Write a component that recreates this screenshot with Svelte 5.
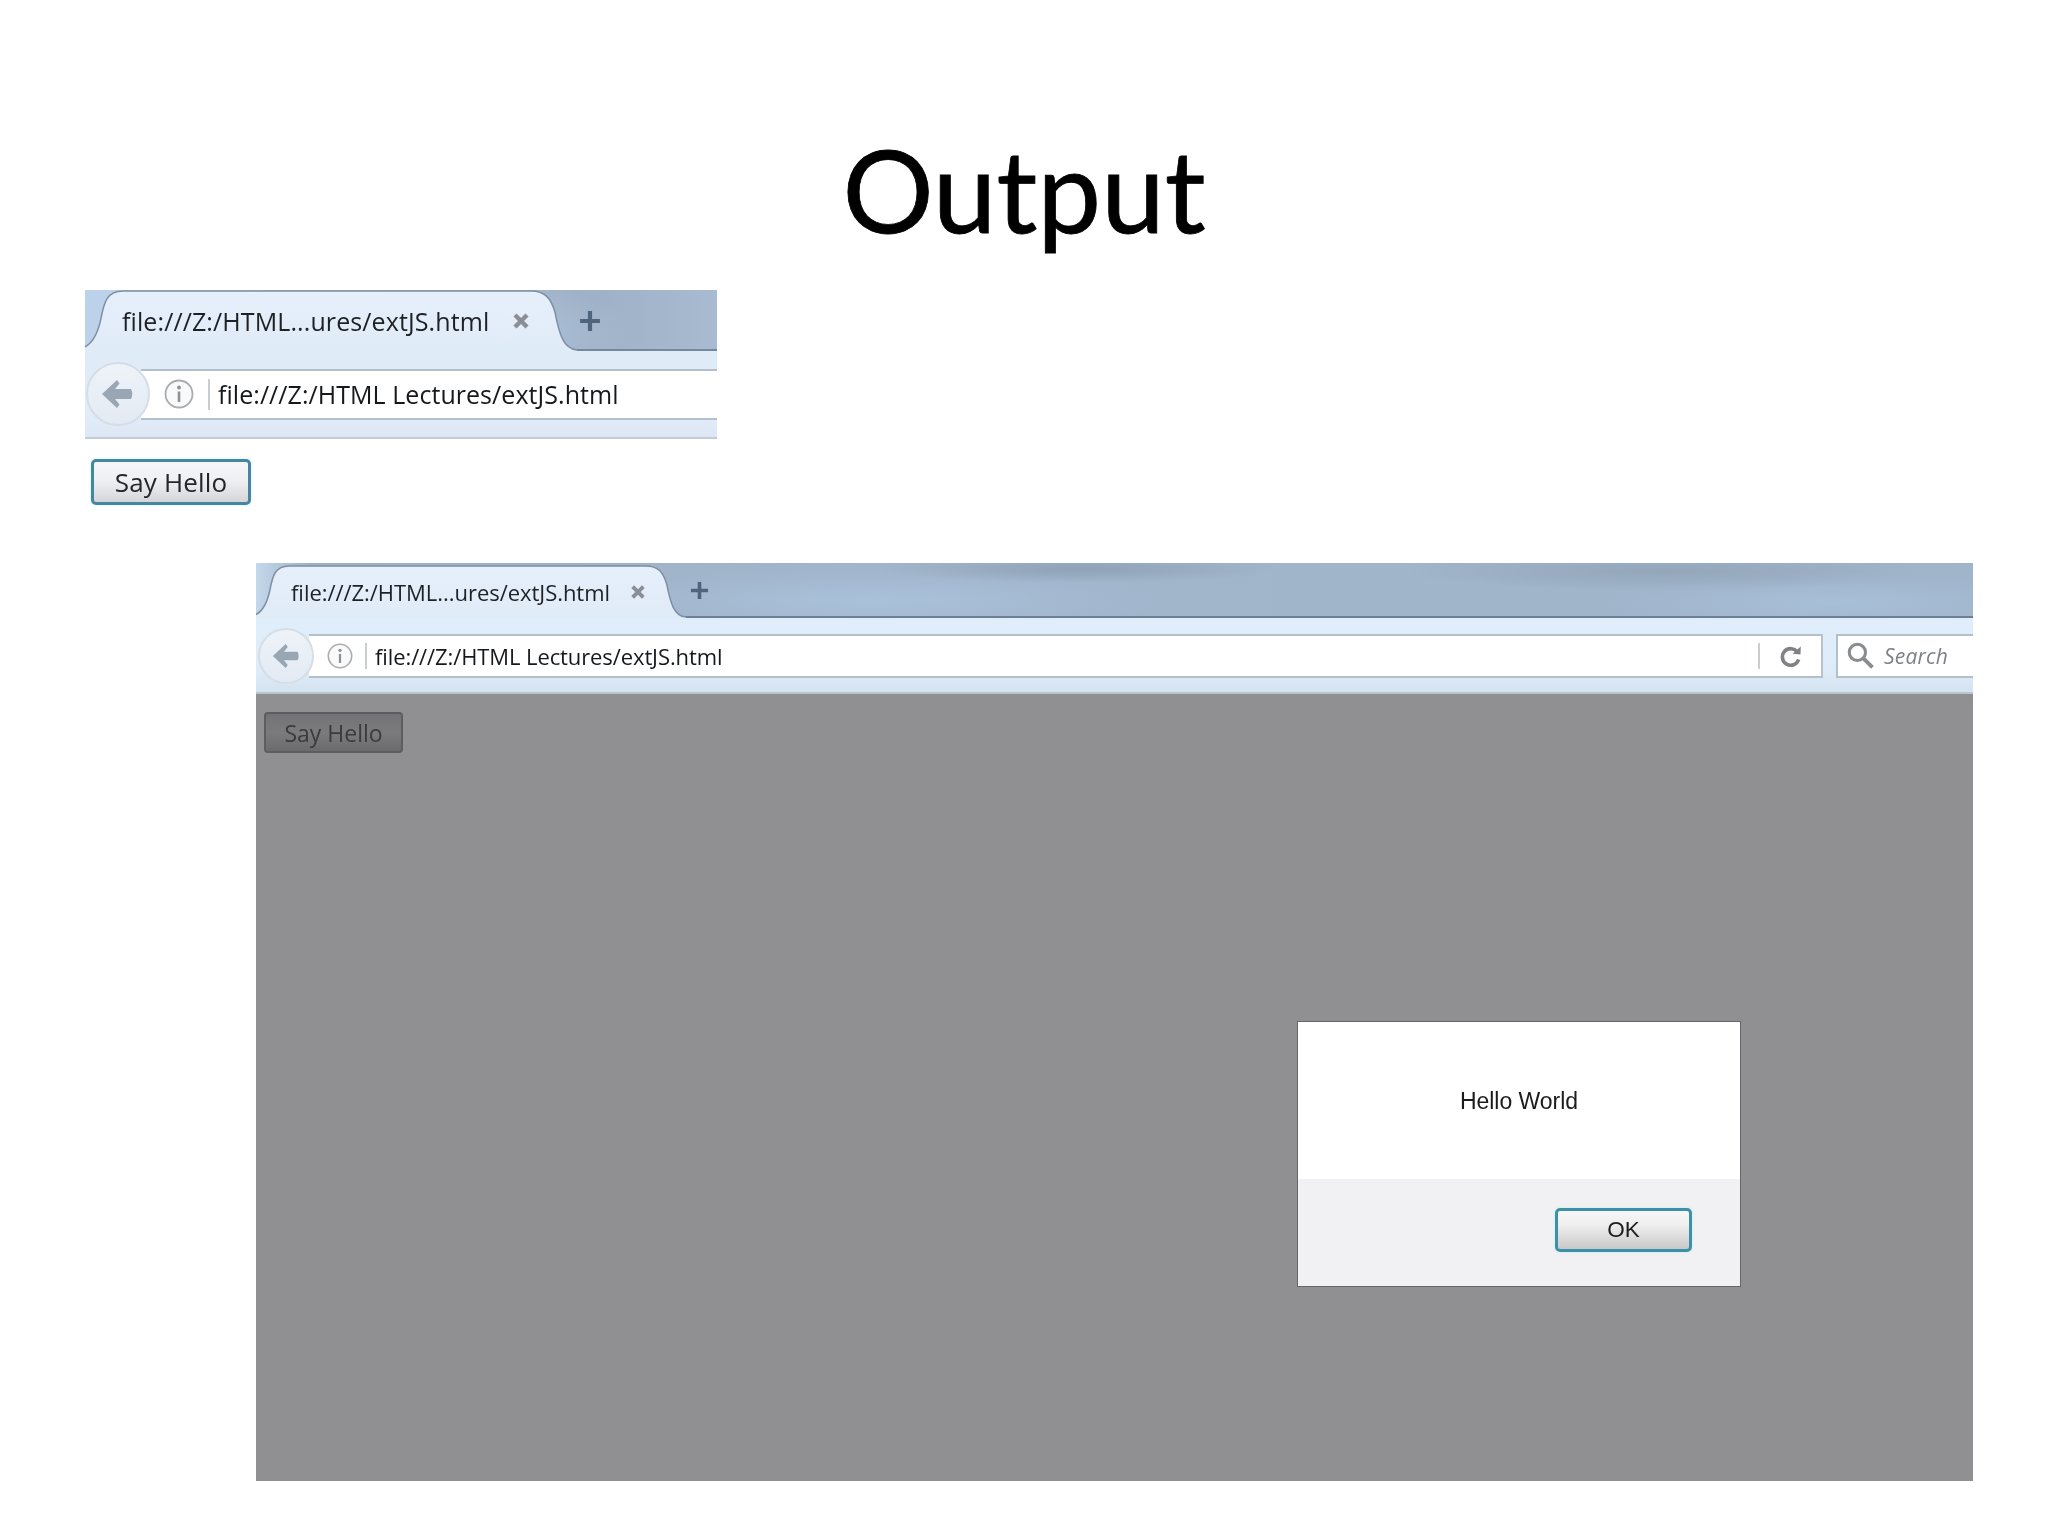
<script>
  const tabText = 'file:///Z:/HTML...ures/extJS.html';
  const urlText = 'file:///Z:/HTML Lectures/extJS.html';
</script>

{#snippet chrome(size, full)}
  <div class="bar {size}">
    <div class="tab">
      <svg class="tabshape" viewBox="0 0 492 60" preserveAspectRatio="none" aria-hidden="true">
        <defs>
          <linearGradient id="tabfill-{size}" x1="0" y1="0" x2="0" y2="1">
            <stop offset="0" stop-color="#e6f0fb" />
            <stop offset="1" stop-color="#e0ebf8" />
          </linearGradient>
        </defs>
        <path d="M0 60 L0 56 C8 52 13 42 16 28 C19 12 22 1 38 1 L446 1 C460 1 466 8 470 22 C474 42 478 58 492 59 L492 60 Z" fill="url(#tabfill-{size})" />
        <path d="M0 56 C8 52 13 42 16 28 C19 12 22 1 38 1 L446 1 C460 1 466 8 470 22 C474 42 478 58 492 59" fill="none" stroke="#7f8fa3" stroke-width="1.5" vector-effect="non-scaling-stroke" />
      </svg>
      <span class="tabtext">{tabText}</span>
      <svg class="close" viewBox="0 0 18 18" aria-hidden="true">
        <path d="M3 3 L15 15 M15 3 L3 15" stroke="#8b8f95" stroke-width="4.4" fill="none" />
      </svg>
    </div>
    <svg class="plus" viewBox="0 0 20 20" aria-hidden="true">
      <path d="M10 1 V19 M1 10 H19" stroke="#4f647d" stroke-width="3.8" fill="none" />
    </svg>
  </div>
  <div class="tools {size}">
    <div class="back">
      <svg viewBox="0 0 34 30" aria-hidden="true">
        <path d="M16 1 L1 15 L16 29 L18.5 25.5 L14 20 H30 Q32.5 15 30 10 H14 L18.5 4.5 Z" fill="#99a6b4" />
      </svg>
    </div>
    <div class="url">
      <svg class="info" viewBox="0 0 30 30" aria-hidden="true">
        <circle cx="15" cy="15" r="13.5" fill="#f9fafb" stroke="#a9abad" stroke-width="1.8" />
        <circle cx="15" cy="8.5" r="1.9" fill="#8f9294" />
        <path d="M15 12.5 V23" stroke="#8f9294" stroke-width="2.6" />
      </svg>
      <span class="sep"></span>
      <span class="urltext">{urlText}</span>
      {#if full}
        <span class="sep right"></span>
        <svg class="reload" viewBox="0 0 24 24" aria-hidden="true">
          <path d="M18.5 8.2 A8.3 8.3 0 1 0 19.6 15.5" fill="none" stroke="#7f8184" stroke-width="3.6" />
          <path d="M13.5 9.8 L21.5 10.4 L21.8 2.6 Z" fill="#7f8184" />
        </svg>
      {/if}
    </div>
    {#if full}
      <div class="search">
        <svg viewBox="0 0 26 26" aria-hidden="true">
          <circle cx="10" cy="10" r="7.8" fill="none" stroke="#8a8d90" stroke-width="3" />
          <path d="M15.6 15.6 L24.5 24.5" stroke="#8a8d90" stroke-width="3.8" />
        </svg>
        <span>Search</span>
      </div>
    {/if}
  </div>
{/snippet}

<div class="page">
  <h1>Output</h1>

  <section class="first">
    {@render chrome('big', false)}
    <button class="hello">Say Hello</button>
  </section>

  <section class="second">
    {@render chrome('small', true)}
    <div class="dim">
      <button class="hello shaded">Say Hello</button>
      <div class="dialog">
        <div class="message">Hello World</div>
        <div class="actions"><button class="ok">OK</button></div>
      </div>
    </div>
  </section>
</div>

<style>
  :global(body) { margin: 0; background: #fff; }
  .page { width: 2048px; height: 1536px; background: #fff; overflow: hidden; font-family: "Open Sans", sans-serif; }
  h1 {
    margin: 0;
    padding-top: 122px;
    height: 168px;
    text-align: center;
    font: 400 114px/134px Lato, sans-serif;
    -webkit-text-stroke: 0.8px #000;
    color: #000;
  }

  .first { margin-left: 85px; width: 632px; height: 273px; filter: blur(0.45px); }
  .second { margin-left: 256px; width: 1717px; height: 918px; display: flex; flex-direction: column; filter: blur(0.45px); }

  .bar { display: flex; align-items: flex-end; position: relative; box-sizing: border-box; }
  .bar.big {
    height: 61px;
    border-bottom: 2px solid #76889c;
    background:
      radial-gradient(ellipse 120px 50px at 430px 45px, #aabfd8, transparent),
      linear-gradient(90deg, #bcd2ea 0, #bcd2ea 6%, #9fb1c6 80%, #a9bbd0 100%);
  }
  .bar.small {
    height: 55px;
    border-bottom: 2px solid #6d7f93;
    background:
      radial-gradient(ellipse 200px 14px at 48% 6px, #8fa2b7, transparent),
      radial-gradient(ellipse 260px 20px at 82% 8px, #93a6ba, transparent),
      radial-gradient(ellipse 240px 30px at 92% 40px, #a7bfd8, transparent),
      radial-gradient(ellipse 300px 34px at 36% 38px, #a9c1da, transparent),
      linear-gradient(90deg, #c4d8ec 0, #9fb3c8 3%, #a1b5cb 40%, #a0b4ca 100%);
  }

  .tab { position: relative; display: flex; align-items: center; box-sizing: border-box; flex: none; margin-bottom: -2px; z-index: 1; }
  .tabshape { position: absolute; left: 0; top: 0; width: 100%; height: 100%; }
  .tabtext, .close { position: relative; }
  .tabtext { white-space: nowrap; color: #1d2126; }
  .close { flex: none; }
  .plus { flex: none; align-self: center; position: relative; top: 1px; }

  .big .tab { width: 492px; height: 61px; padding-left: 37px; }
  .big .tabtext { font-size: 25px; letter-spacing: 0.1px; width: 364px; }
  .big .close { width: 18px; height: 18px; margin-left: 26px; }
  .big .plus { width: 22px; height: 22px; margin-left: 2px; }

  .small .tab { width: 430px; height: 53px; padding-left: 35px; }
  .small .tabtext { font-size: 22px; letter-spacing: -0.04px; width: 317px; }
  .small .close { width: 16px; height: 16px; margin-left: 22px; }
  .small .plus { width: 19px; height: 19px; margin-left: 4px; }

  .tools { display: flex; align-items: center; box-sizing: border-box; position: relative; }
  .tools.big { height: 88px; padding-left: 1px; background: linear-gradient(#e0ebf8, #e2ecf9 78%, #dde7f3); border-bottom: 2px solid #c1ccd8; }
  .tools.small { height: 76px; padding: 1px 0 0 2px; background: linear-gradient(#e0edfa, #deebf8 70%, #d5e3f0); border-bottom: 2px solid #b9c6d2; }

  .back {
    flex: none;
    box-sizing: border-box;
    border-radius: 50%;
    border: 2px solid #d5dde7;
    background: linear-gradient(#eef3f9, #e3eaf3);
    display: flex;
    align-items: center;
    justify-content: center;
    position: relative;
    z-index: 1;
  }
  .big .back { width: 64px; height: 64px; margin-right: -9px; }
  .big .back svg { width: 34px; height: 30px; }
  .small .back { width: 56px; height: 56px; margin-right: -5px; }
  .small .back svg { width: 29px; height: 26px; }

  .url {
    flex: 1;
    min-width: 0;
    display: flex;
    align-items: center;
    box-sizing: border-box;
    background: #fff;
    border-top: 2px solid #b3bfcb;
    border-bottom: 2px solid #b3bfcb;
    color: #16191c;
    white-space: nowrap;
  }
  .big .url { height: 51px; padding-left: 23px; }
  .big .info { width: 30px; height: 30px; flex: none; }
  .big .sep { height: 31px; margin-left: 14px; }
  .big .urltext { font-size: 25px; letter-spacing: 0.05px; margin-left: 8px; }

  .small .url { height: 44px; padding-left: 18px; border-right: 2px solid #b7c3cf; flex: none; width: 1514px; }
  .small .info { width: 26px; height: 26px; flex: none; }
  .small .sep { height: 26px; margin-left: 12px; }
  .small .urltext { font-size: 22px; letter-spacing: -0.1px; margin-left: 8px; }
  .sep { width: 2px; background: #c9ced3; flex: none; }
  .small .sep.right { margin-left: auto; }
  .reload { width: 24px; height: 24px; flex: none; margin-left: 19px; margin-right: 18px; }

  .search {
    margin-left: 13px;
    flex: 1;
    height: 44px;
    box-sizing: border-box;
    background: #fff;
    border: 2px solid #b3bfcb;
    border-right: 0;
    display: flex;
    align-items: center;
    padding-left: 9px;
    gap: 10px;
  }
  .search svg { width: 27px; height: 27px; flex: none; }
  .search span { font: italic 400 21px "Open Sans", sans-serif; color: #7d8186; letter-spacing: 0.2px; }

  .hello {
    display: block;
    box-sizing: border-box;
    margin: 0;
    padding: 0;
    font-family: "Open Sans", sans-serif;
    color: #23262a;
    cursor: default;
  }
  .first .hello {
    width: 160px;
    height: 46px;
    margin: 20px 0 0 6px;
    font-size: 26px;
    letter-spacing: 0.15px;
    border: 3px solid #47869f;
    border-radius: 5px;
    background: linear-gradient(#f4f6f9, #eef0f3 45%, #d6d6da);
    box-shadow: 0 0 3px #c6f1f6;
  }
  .dim {
    flex: 1;
    position: relative;
    background: #909092;
    padding: 18px 8px;
  }
  .hello.shaded {
    width: 139px;
    height: 41px;
    font-size: 23px;
    letter-spacing: 0;
    color: #3a3b3e;
    border: 2px solid #5d5d60;
    border-radius: 4px;
    background: linear-gradient(#737377, #7b7b7e 50%, #6b6b6e);
  }
  .dialog {
    position: absolute;
    left: 1041px;
    top: 327px;
    width: 444px;
    height: 266px;
    box-sizing: border-box;
    border: 1px solid #666668;
    background: #fff;
    display: flex;
    flex-direction: column;
    font-family: "Liberation Sans", Arial, sans-serif;
    color: #1b1b1d;
  }
  .message {
    height: 157px;
    display: flex;
    align-items: center;
    justify-content: center;
    font-size: 23px;
    box-sizing: border-box;
    padding-top: 1px;
    letter-spacing: -0.03px;
  }
  .actions {
    flex: 1;
    background: #f1f1f3;
    position: relative;
    display: flex;
    justify-content: flex-end;
    padding: 29px 48px 0 0;
  }
  .ok {
    width: 137px;
    height: 44px;
    box-sizing: border-box;
    border: 3px solid #3e8fa8;
    border-radius: 5px;
    background: linear-gradient(#f7f7f7, #efefef 35%, #c9c9c9);
    font: 400 22.5px "Liberation Sans", Arial, sans-serif;
    color: #1d1d1f;
    box-shadow: 0 0 3px #bdf1f4;
    padding: 0;
  }
</style>
